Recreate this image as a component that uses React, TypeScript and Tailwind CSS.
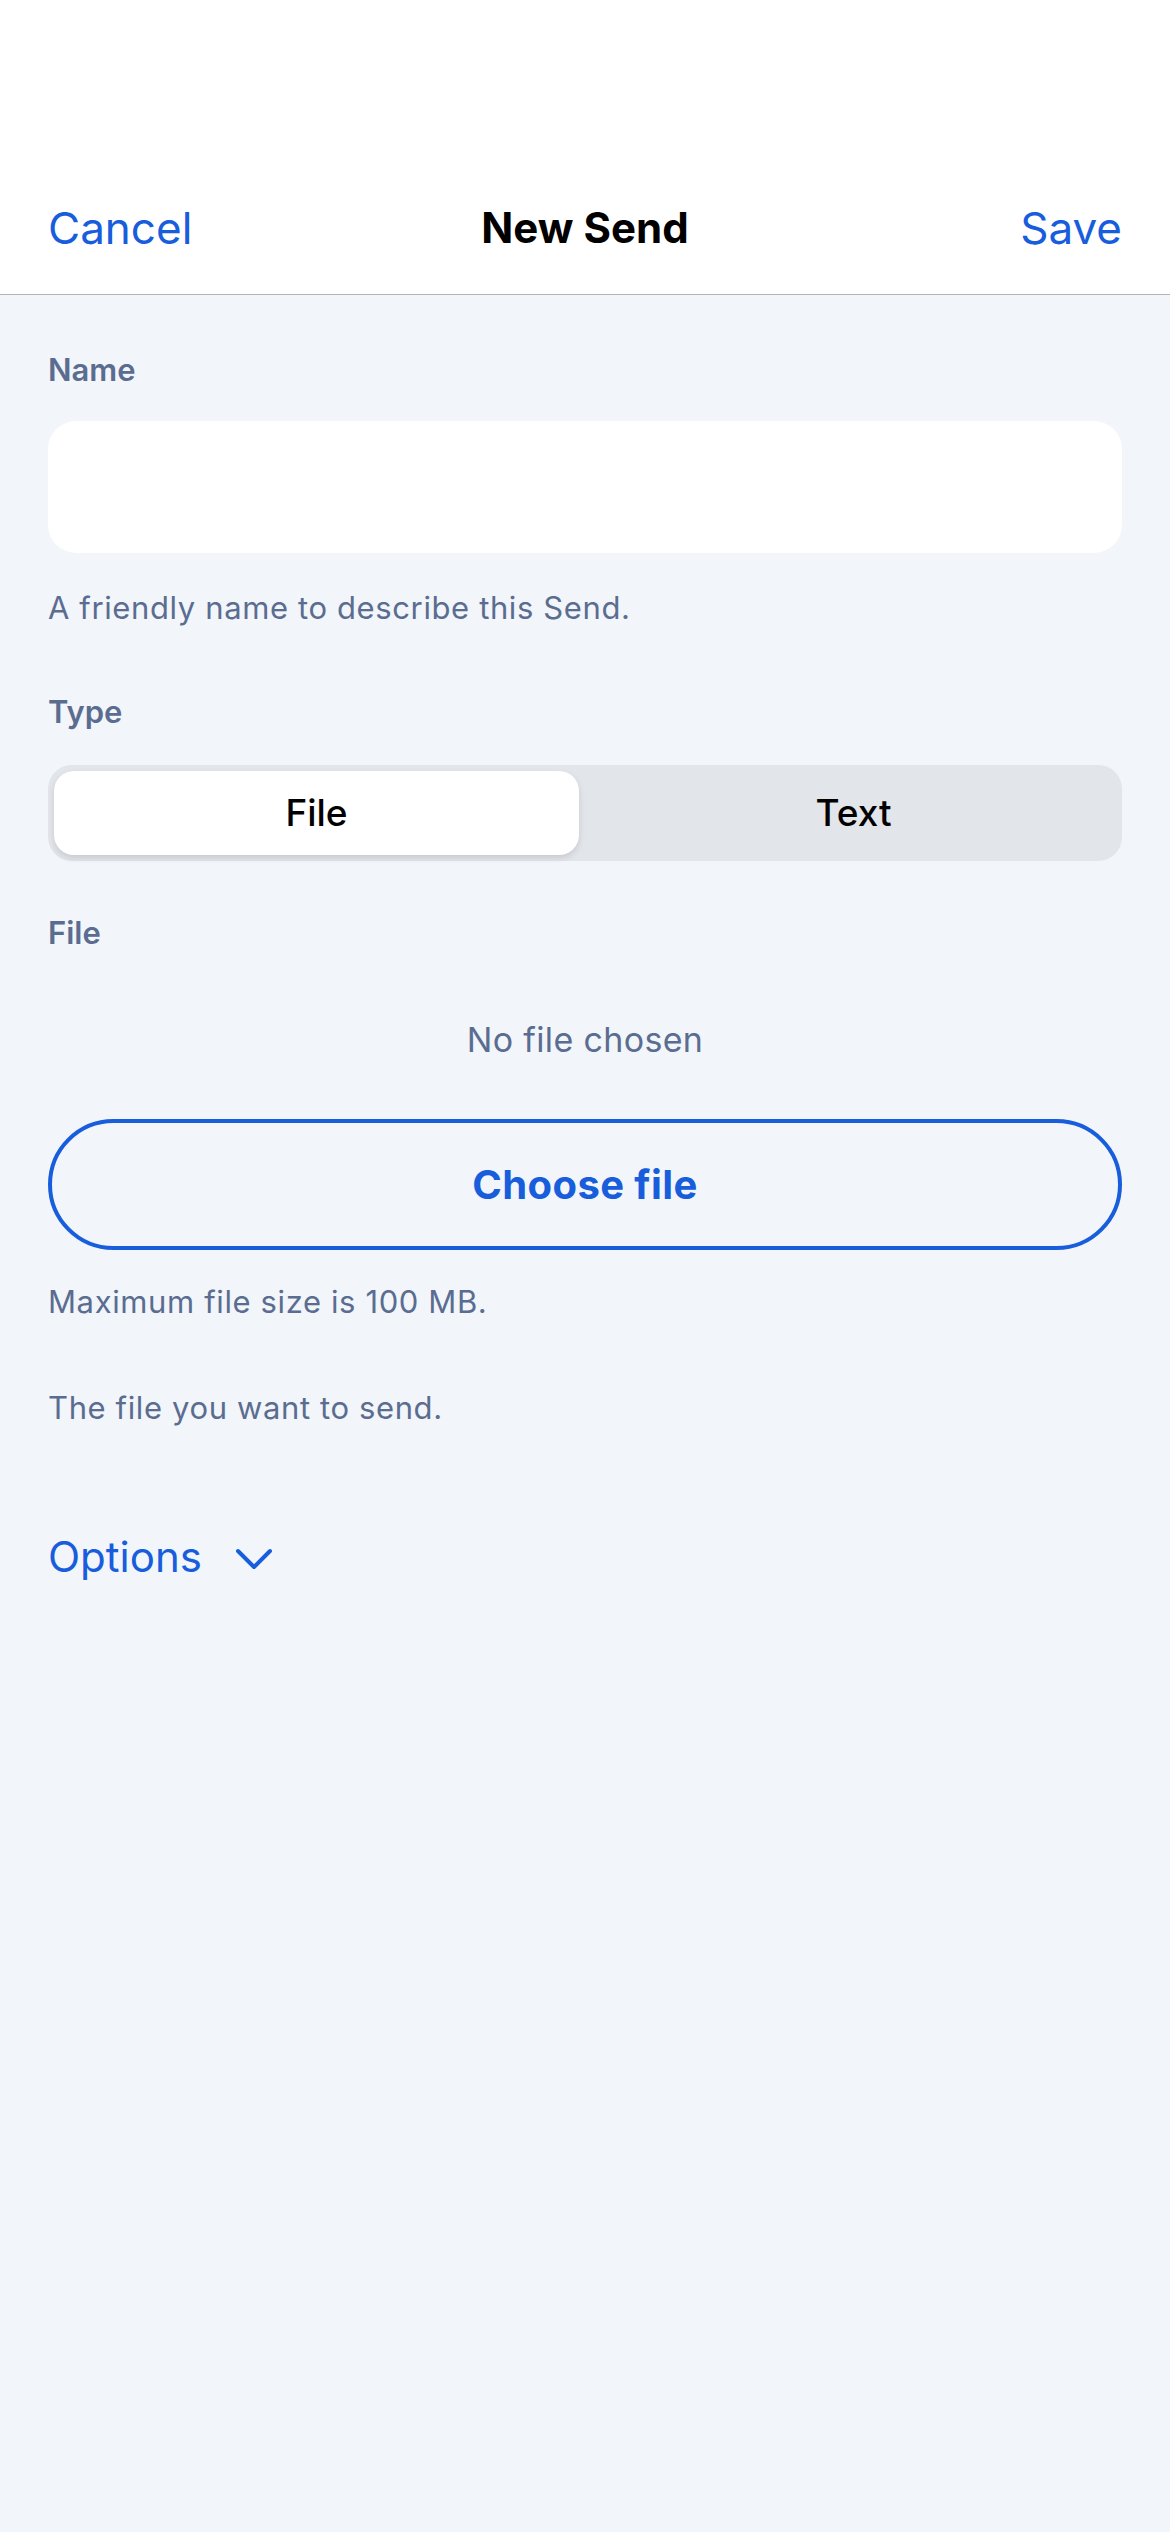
const font = { fontFamily: 'Inter, "Noto Sans", sans-serif' };

function Label({ children, className = '' }: { children: React.ReactNode; className?: string }) {
    return (
        <div className={`text-[31px] leading-[40px] font-semibold text-[#5a6d91] ${className}`}>
            {children}
        </div>
    );
}

function Hint({ children, className = '' }: { children: React.ReactNode; className?: string }) {
    return (
        <p className={`text-[31px] leading-[40px] tracking-[0.02em] text-[#5a6d91] ${className}`}>
            {children}
        </p>
    );
}

export default function App() {
    return (
        <div className="min-h-[2532px] w-[1170px] bg-[#f2f5f9]" style={font}>
            {/* header */}
            <header className="bg-white border-b border-[#b4b4b4]">
                <div className="h-[162px]" />
                <div className="h-[132px] px-[48px] grid grid-cols-3 items-center">
                    <button className="justify-self-start text-[44px] leading-[52px] text-[#175ddc]">Cancel</button>
                    <h1 className="text-center text-[42px] leading-[52px] font-bold text-black">New Send</h1>
                    <button className="justify-self-end text-[44px] leading-[52px] text-[#175ddc]">Save</button>
                </div>
            </header>

            <main className="px-[48px]">
                <Label className="mt-[55px]">Name</Label>
                <div className="mt-[31px] h-[132px] rounded-[28px] bg-white" />
                <Hint className="mt-[35px]">A friendly name to describe this Send.</Hint>

                <Label className="mt-[64px]">Type</Label>
                <div className="mt-[33px] h-[96px] rounded-[24px] bg-[#e2e5ea] p-[6px] flex">
                    <div className="flex-1 flex pr-[12px]">
                        <div className="flex-1 rounded-[20px] bg-white shadow-[0_3px_6px_rgba(0,0,0,0.12)] flex items-center justify-center text-[37px] font-medium text-black">
                            File
                        </div>
                    </div>
                    <div className="flex-1 flex items-center justify-center text-[37px] font-medium text-black">
                        Text
                    </div>
                </div>

                <Label className="mt-[52px]">File</Label>
                <p className="mt-[65px] text-center text-[34px] leading-[44px] tracking-[0.01em] text-[#5a6d91]">
                    No file chosen
                </p>
                <button className="mt-[57px] w-full h-[131px] rounded-full border-[4px] border-[#175ddc] flex items-center justify-center text-[40px] font-bold tracking-[0.01em] text-[#175ddc]">
                    Choose file
                </button>

                <Hint className="mt-[32px]">Maximum file size is 100 MB.</Hint>
                <Hint className="mt-[66px]">The file you want to send.</Hint>

                <button className="mt-[103px] flex items-center gap-[34px] text-[42px] leading-[52px] text-[#175ddc]">
                    Options
                    <svg width="36" height="22" viewBox="0 0 36 22" fill="none" className="mt-[4px]">
                        <polyline
                            points="2,3 18,19 34,3"
                            stroke="currentColor"
                            strokeWidth="4"
                            strokeLinecap="round"
                            strokeLinejoin="round"
                        />
                    </svg>
                </button>
            </main>
        </div>
    );
}
